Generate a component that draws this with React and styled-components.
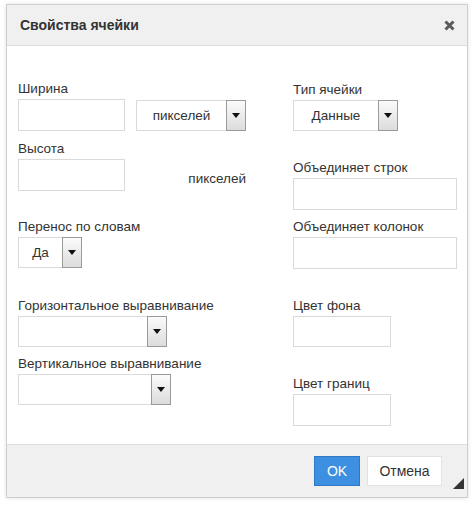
import React from 'react'
import styled, { createGlobalStyle } from 'styled-components'

const GlobalStyle = createGlobalStyle`
  html, body {
    margin: 0;
    padding: 0;
    background: #fff;
    font-family: 'Liberation Sans', Arial, sans-serif;
  }
`

export const Page = styled.div`
  width: 474px;
  height: 507px;
  padding: 4px 0 0 6px;
  box-sizing: border-box;
`

export const Dialog = styled.div`
  position: relative;
  width: 462px;
  border: 1px solid #cfcfcf;
  box-shadow: 0 0 4px rgba(0, 0, 0, 0.12);
  box-sizing: border-box;
  background: #fff;
`

export const Header = styled.div`
  height: 41px;
  display: flex;
  align-items: center;
  justify-content: space-between;
  padding: 0 12px 0 13px;
  background: #f0f0f0;
  border-bottom: 1px solid #dedede;
  box-sizing: border-box;
`

export const Title = styled.h2`
  margin: 0;
  font-size: 14px;
  font-weight: bold;
  color: #333;
`

export const Close = styled.button`
  border: 0;
  padding: 0;
  background: none;
  display: flex;
  cursor: pointer;
`

export const Body = styled.div`
  height: 398px;
  display: flex;
  padding: 35px 0 0 11px;
  box-sizing: border-box;
`

export const Column = styled.div`
  width: ${(p) => p.$width}px;
  display: flex;
  flex-direction: column;
`

export const Field = styled.div`
  margin-top: ${(p) => p.$gap || 0}px;
`

export const Label = styled.div`
  font-size: 13.5px;
  line-height: 16px;
  color: #333;
  margin-bottom: 2px;
  white-space: nowrap;
`

export const Row = styled.div`
  display: flex;
  align-items: flex-end;
  justify-content: space-between;
  width: ${(p) => p.$width}px;
`

export const TextBox = styled.div`
  width: ${(p) => p.$width}px;
  height: ${(p) => p.$height || 32}px;
  border: 1px solid #dadada;
  box-sizing: border-box;
  background: #fff;
`

export const Unit = styled.span`
  font-size: 13.5px;
  line-height: 16px;
  color: #333;
  padding-bottom: 4px;
`

export const SelectBox = styled.div`
  width: ${(p) => p.$width}px;
  height: 31px;
  display: flex;
  box-sizing: border-box;
`

export const SelectValue = styled.div`
  flex: 1;
  display: flex;
  align-items: center;
  justify-content: center;
  border: 1px solid #dadada;
  border-right: 0;
  font-size: 13.5px;
  color: #333;
  background: #fff;
`

export const Arrow = styled.div`
  width: 20px;
  height: 31px;
  display: flex;
  align-items: center;
  justify-content: center;
  border: 1px solid #9a9a9a;
  box-sizing: border-box;
  background: linear-gradient(#fbfbfb, #dcdcdc);
  &::after {
    content: '';
    border-left: 4px solid transparent;
    border-right: 4px solid transparent;
    border-top: 5px solid #111;
  }
`

export const Footer = styled.div`
  height: 53px;
  display: flex;
  align-items: center;
  justify-content: flex-end;
  gap: 7px;
  padding-right: 25px;
  background: #f0f0f0;
  border-top: 1px solid #dedede;
  box-sizing: border-box;
`

export const Button = styled.button`
  height: 30px;
  padding: 0;
  width: ${(p) => p.$width}px;
  font-family: inherit;
  font-size: 14px;
  color: ${(p) => (p.$primary ? '#fff' : '#333')};
  background: ${(p) => (p.$primary ? '#3d8fe1' : '#fff')};
  border: 1px solid ${(p) => (p.$primary ? '#2f78c4' : '#e2e2e2')};
  cursor: pointer;
`

export const Resize = styled.div`
  position: absolute;
  right: 3px;
  bottom: 8px;
  width: 0;
  height: 0;
  border-left: 11px solid transparent;
  border-bottom: 11px solid #333;
`

const Select = ({ width, value }) => (
  <SelectBox $width={width}>
    <SelectValue>{value}</SelectValue>
    <Arrow />
  </SelectBox>
)

function App() {
  return (
    <Page>
      <GlobalStyle />
      <Dialog>
        <Header>
          <Title>Свойства ячейки</Title>
          <Close aria-label="Закрыть">
            <svg width="11" height="11" viewBox="0 0 11 11">
              <path d="M1.5 1.5 L9.5 9.5 M9.5 1.5 L1.5 9.5" stroke="#5a5a5a" strokeWidth="3" />
            </svg>
          </Close>
        </Header>
        <Body>
          <Column $width={275}>
            <Field>
              <Label>Ширина</Label>
              <Row $width={228}>
                <TextBox $width={107} />
                <Select width={110} value="пикселей" />
              </Row>
            </Field>
            <Field $gap={10}>
              <Label>Высота</Label>
              <Row $width={228}>
                <TextBox $width={107} />
                <Unit>пикселей</Unit>
              </Row>
            </Field>
            <Field $gap={28}>
              <Label>Перенос по словам</Label>
              <Select width={64} value="Да" />
            </Field>
            <Field $gap={30}>
              <Label>Горизонтальное выравнивание</Label>
              <Select width={149} value="" />
            </Field>
            <Field $gap={9}>
              <Label>Вертикальное выравнивание</Label>
              <Select width={153} value="" />
            </Field>
          </Column>
          <Column $width={164}>
            <Field $gap={1}>
              <Label>Тип ячейки</Label>
              <Select width={105} value="Данные" />
            </Field>
            <Field $gap={29}>
              <Label>Объединяет строк</Label>
              <TextBox $width={164} />
            </Field>
            <Field $gap={9}>
              <Label>Объединяет колонок</Label>
              <TextBox $width={164} />
            </Field>
            <Field $gap={29}>
              <Label>Цвет фона</Label>
              <TextBox $width={98} $height={31} />
            </Field>
            <Field $gap={29}>
              <Label>Цвет границ</Label>
              <TextBox $width={98} />
            </Field>
          </Column>
        </Body>
        <Footer>
          <Button $primary $width={46}>OK</Button>
          <Button $width={75}>Отмена</Button>
        </Footer>
        <Resize />
      </Dialog>
    </Page>
  )
}

export default App
